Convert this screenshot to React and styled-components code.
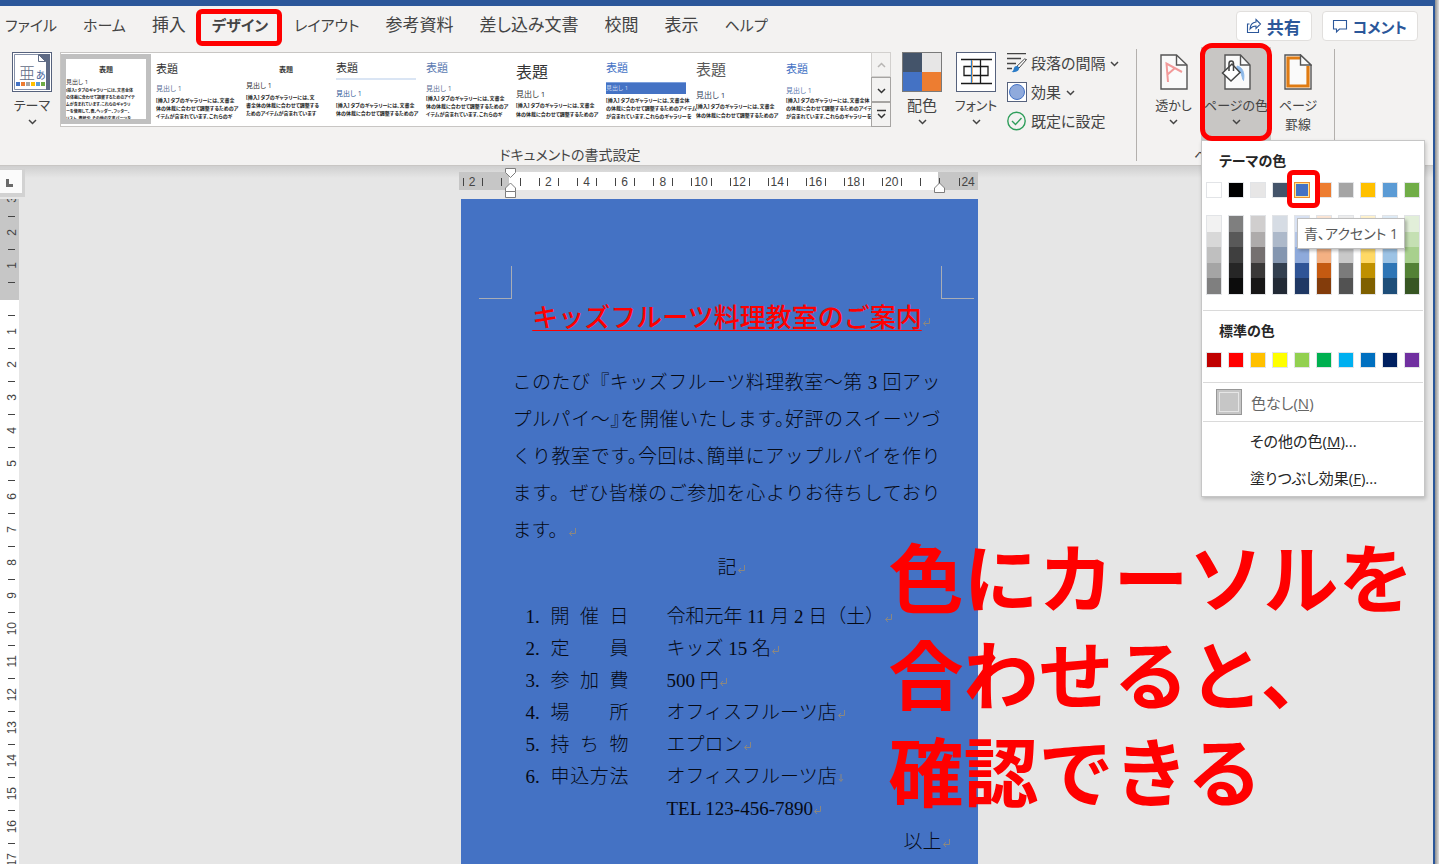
import { useState } from "react";
import styled, { createGlobalStyle, css } from "styled-components";

const GlobalStyle = createGlobalStyle`
*, *::before, *::after {
  box-sizing: border-box;
}

body {
  margin: 0;
  overflow: hidden;
  font-family: "Open Sans", "Noto Sans CJK JP", sans-serif;
  font-size: 15px;
  color: #444444;
}

button {
  margin: 0;
  padding: 0;
  border: 0;
  background: none;
  font: inherit;
  color: inherit;
  cursor: pointer;
}

h1, h2, p, ol {
  margin: 0;
  padding: 0;
}
`;

const Desktop = styled.div`
display: flex;
height: 100vh;
padding-right: 4px;
overflow: hidden;
background: linear-gradient(to left, #e0e0e0, #8f8f8f 4px);
`;

const Frame = styled.div`
position: relative;
display: flex;
flex-direction: column;
flex: 1;
min-width: 0;
border-top: 6px solid #2b579a;
border-right: 2px solid #2b579a;
background: #f3f2f1;
`;

/* ---------- tabs ---------- */

const TabBar = styled.nav`
display: flex;
align-items: center;
gap: 26px;
height: 40px;
padding: 0 15px 0 5px;
font-size: 17px;
font-feature-settings: "palt";
`;

const TabWrap = styled.div`
position: relative;
`;

const Tab = styled.button`
display: block;
height: 34px;
line-height: 30px;
white-space: nowrap;
font-size: ${({ $kana }) => ($kana ? "15px" : "17px")};
border-bottom: 2px solid ${({ $active }) => ($active ? "#2b579a" : "transparent")};
font-weight: ${({ $active }) => ($active ? 700 : 400)};
`;

const Actions = styled.div`
display: flex;
gap: 10px;
margin-left: auto;
`;

const ActionButton = styled.button`
display: flex;
align-items: center;
gap: 5px;
height: 30px;
padding: 0 10px 0 9px;
border: 1px solid #e1dfdd;
border-radius: 4px;
background: #ffffff;
color: #2b579a;
font-size: ${({ $kana }) => ($kana ? "15px" : "17px")};
font-weight: 700;
white-space: nowrap;
`;

const Highlight = styled.div`
position: absolute;
inset: ${({ $inset }) => $inset};
border: 5px solid #ff0000;
border-radius: ${({ $radius }) => $radius || "6px"};
pointer-events: none;
z-index: 3;
`;

/* ---------- ribbon ---------- */

const Ribbon = styled.div`
position: relative;
z-index: 2;
display: flex;
padding-top: 1px;
border-bottom: 1px solid #c8c6c4;
font-feature-settings: "palt";
`;

const Group = styled.section`
display: flex;
flex-direction: column;
padding: ${({ $pad }) => $pad};
`;

const GroupRow = styled.div`
display: flex;
height: 94px;
`;

const GroupLabel = styled.div`
margin-top: 4px;
line-height: 20px;
font-size: 14px;
text-align: center;
`;

const Divider = styled.div`
width: 1px;
margin: 2px 0 4px;
background: #b3b0ad;
`;

const ButtonWrap = styled.div`
position: relative;
`;

const BigButton = styled.button`
display: flex;
flex-direction: column;
align-items: center;
width: ${({ $width }) => $width};
height: 94px;
padding-top: 5px;
line-height: 19px;
font-size: ${({ $kana }) => ($kana ? "13px" : "15px")};
white-space: nowrap;
background: ${({ $pressed }) => ($pressed ? "#c8c6c4" : "transparent")};
`;

const IconSlot = styled.span`
display: flex;
align-items: center;
justify-content: center;
height: 40px;
margin-bottom: 4px;
`;

const SmallList = styled.div`
display: flex;
flex-direction: column;
width: 133px;
padding: 1px 0 0 4px;
`;

const SmallButton = styled.button`
display: flex;
align-items: center;
gap: 4px;
height: 29px;
white-space: nowrap;
`;

const Gallery = styled.div`
display: flex;
height: 75px;
margin: 5px 4px 0 0;
border: 1px solid #c8c6c4;
background: #ffffff;
`;

const Thumb = styled.button`
display: flex;
flex-direction: column;
width: 90px;
height: 73px;
padding: ${({ $top }) => $top}px 5px 0;
text-align: left;
color: #222222;
white-space: nowrap;
${({ $selected }) =>
    $selected &&
    css`
      height: 70px;
      margin-top: 1px;
      border: 5px solid #c0c0c0;
      padding: ${({ $top }) => $top - 6}px 0 0;
      overflow: hidden;
    `}
`;

const ThumbTitle = styled.span`
line-height: 14px;
font-size: ${({ $size }) => $size}px;
font-weight: ${({ $center }) => ($center ? 700 : 400)};
text-align: ${({ $center }) => ($center ? "center" : "left")};
color: ${({ $color }) => $color || "#333333"};
`;

const ThumbRule = styled.span`
height: 2px;
margin-top: 3px;
background: #dae5f4;
`;

const ThumbHeading = styled.span`
margin-top: ${({ $gap }) => $gap}px;
line-height: 10px;
font-size: ${({ $size }) => $size || 7}px;
color: ${({ $color }) => $color || "#333333"};
${({ $banner }) =>
    $banner &&
    css`
      line-height: 11px;
      border-top: 1px solid #7da0dc;
      background: #4472c4;
      color: #c9d8f2;
    `}
`;

const ThumbText = styled.span`
margin-top: ${({ $gap }) => $gap}px;
line-height: ${({ $line }) => $line || 8}px;
font-size: ${({ $size }) => $size || 5}px;
font-weight: 700;
white-space: pre;
`;

const GalleryScroll = styled.div`
display: flex;
flex-direction: column;
width: 20px;
margin: -1px -1px -1px 0;
`;

const ScrollButton = styled.button`
display: flex;
flex: 1;
align-items: center;
justify-content: center;
border: 1px solid ${({ disabled }) => (disabled ? "#d2d0ce" : "#a6a4a2")};
background: #f3f2f1;
color: ${({ disabled }) => (disabled ? "#b8b6b4" : "#333333")};
`;

/* ---------- colour menu ---------- */

const Menu = styled.div`
position: absolute;
top: 93px;
left: 0;
width: 224px;
border: 1px solid #c6c6c6;
background: #ffffff;
box-shadow: 1px 2px 4px rgba(0, 0, 0, 0.2);
color: #262626;
z-index: 2;
`;

const MenuTitle = styled.h2`
padding: 0 17px 1px;
line-height: 40px;
font-size: 14px;
font-weight: 700;
`;

const SwatchRow = styled.div`
display: flex;
justify-content: center;
gap: 6px;
margin-bottom: ${({ $after }) => $after}px;
`;

const SwatchWrap = styled.div`
position: relative;
display: flex;
`;

const Swatch = styled.button`
width: 16px;
height: 16px;
border: 1px solid ${({ $active }) => ($active ? "#ee8f2d" : "#e2e4e7")};
background: ${({ $color }) => $color};
box-shadow: ${({ $active }) => ($active ? "inset 0 0 0 1px #ffe294" : "none")};
`;

const TintColumn = styled.div`
display: flex;
flex-direction: column;
width: 16px;
height: 80px;
border: 1px solid #e2e4e7;
`;

const Tint = styled.button`
flex: 1;
background: ${({ $color }) => $color};
`;

const Tooltip = styled.div`
position: absolute;
top: 36px;
left: 3px;
padding: 0 6px;
border: 1px solid #bebebe;
background: #ffffff;
box-shadow: 2px 2px 3px rgba(0, 0, 0, 0.25);
color: #575757;
font-size: 14px;
line-height: 29px;
white-space: nowrap;
z-index: 4;
`;

const MenuItem = styled.button`
display: flex;
align-items: center;
gap: 9px;
width: 100%;
height: ${({ $icon }) => ($icon ? "38px" : "37px")};
padding-left: ${({ $icon }) => ($icon ? "14px" : "48px")};
color: ${({ $icon }) => ($icon ? "#666666" : "#262626")};
`;

const MenuLine = styled.div`
height: 1px;
margin: 0 1px;
background: #dadada;
`;

const NoColorBox = styled.span`
width: 26px;
height: 26px;
border: 1px solid #979797;
background: #c6c6c6;
box-shadow: inset 0 0 0 2px #c6c6c6, inset 0 0 0 3px #e6e6e6;
`;

/* ---------- work area ---------- */

const WorkArea = styled.main`
display: flex;
flex-direction: column;
flex: 1;
min-height: 0;
background: linear-gradient(#cfcfcf, #e6e6e6 12px);
`;

const RulerBar = styled.div`
display: grid;
grid-template-columns: 28px 1fr;
height: 33px;
padding: 3px 25px 0 0;
flex-shrink: 0;
`;

const TabStop = styled.button`
display: flex;
align-items: center;
justify-content: center;
width: 25px;
height: 28px;
padding: 3px 4px 0 0;
border: solid #d2d2d2;
border-width: 1px 3px 4px 0;
background: #fbfbfb;
`;

const HRulerWrap = styled.div`
position: relative;
width: 519px;
height: 18px;
margin: 3px auto 0;
`;

const HRuler = styled.div`
display: flex;
height: 18px;
padding-left: 4px;
background: linear-gradient(to right, #c6c6c6 50px, #ffffff 50px 479px, #c6c6c6 479px);
font: 12px/20px "Liberation Sans", sans-serif;
`;

const HCell = styled.div`
flex: 1;
text-align: center;
background: linear-gradient(#444444, #444444) 0 6px / 1px 8px no-repeat;
white-space: nowrap;
`;

const Marker = styled.svg`
position: absolute;
left: ${({ $left }) => $left}px;
top: ${({ $top }) => $top}px;
`;

const Sheet = styled.div`
display: grid;
grid-template-columns: 28px 1fr;
flex: 1;
min-height: 0;
padding-right: 23px;
overflow: hidden;
`;

const VRuler = styled.div`
width: 19px;
background: linear-gradient(#c6c6c6 101px, #ffffff 101px);
font: 12px/16px "Liberation Sans", sans-serif;
overflow: hidden;
`;

const VCell = styled.div`
display: flex;
align-items: center;
justify-content: center;
height: ${({ $cut }) => ($cut ? "17px" : "33px")};
padding-left: 4px;
overflow: hidden;
background: ${({ $cut }) =>
    $cut ? "none" : "linear-gradient(#444444, #444444) 8px 0 / 7px 1px no-repeat"};

span {
  writing-mode: vertical-rl;
  transform: rotate(180deg);
  ${({ $cut }) => $cut && "margin-top: -17px;"}
}
`;

const Page = styled.article`
position: relative;
width: 517px;
min-height: 100%;
margin: 0 auto;
padding: 99px 37px 0 52px;
background: #4472c4;
color: #060a14;
font-family: "Liberation Serif", "Noto Sans CJK JP", serif;
font-size: 19px;
font-weight: 300;
`;

const CropMark = styled.span`
position: absolute;
top: 67px;
width: 33px;
height: 33px;
border: solid #a9adb5;
${({ $side }) =>
    $side === "left"
      ? "left: 18px; border-width: 0 1px 1px 0;"
      : "right: 4px; border-width: 0 0 1px 1px;"}
`;

const DocTitle = styled.h1`
line-height: 36px;
font-family: "Noto Sans CJK JP", sans-serif;
font-size: 26px;
font-weight: 500;
color: #ff0000;
text-align: center;
white-space: nowrap;
padding-left: 10px;

span {
  text-decoration: underline;
  text-decoration-thickness: 1px;
  text-decoration-skip-ink: none;
  text-underline-offset: 3px;
}
`;

const Lead = styled.p`
margin-top: 30px;
line-height: 37px;
`;

const Line = styled.span`
display: block;
white-space: nowrap;
text-align-last: ${({ $last }) => ($last ? "left" : "justify")};
font-feature-settings: ${({ $tight }) => ($tight ? '"halt"' : "normal")};
`;

const Centered = styled.p`
line-height: 37px;
padding-left: 10px;
text-align: center;
`;

const Details = styled.ol`
margin-top: 15px;
padding-left: 13px;
list-style: none;
line-height: 32px;
`;

const Detail = styled.li`
display: grid;
grid-template-columns: 25px 78px 1fr;
white-space: nowrap;
`;

const DetailLabel = styled.span`
text-align-last: justify;
`;

const DetailValue = styled.span`
padding-left: 38px;
`;

const Closing = styled.p`
line-height: 34px;
text-align: right;
white-space: nowrap;
margin-right: -10px;
`;

const Callout = styled.div`
position: absolute;
top: 520px;
left: calc(50% + 172px);
font-family: "Noto Sans CJK JP", sans-serif;
font-size: 75px;
font-weight: 700;
line-height: 97px;
color: #ff0000;
white-space: nowrap;
pointer-events: none;
z-index: 3;
`;

/* ---------- data ---------- */

const tabs = [
  "ファイル",
  "ホーム",
  "挿入",
  "デザイン",
  "レイアウト",
  "参考資料",
  "差し込み文書",
  "校閲",
  "表示",
  "ヘルプ",
];

const isKana = (text) => /^[\u30a0-\u30ff]+$/.test(text);

const bodyNarrow = "[挿入] タブのギャラリーには、文書全\n体の体裁に合わせて調整するためのア\nイテムが含まれています。これらのギ";
const bodyShort = "[挿入] タブのギャラリーには、文書全\n体の体裁に合わせて調整するためのア";
const bodyWide = "[挿入] タブのギャラリーには、文書全体\nの体裁に合わせて調整するためのアイテム\nが含まれています。これらのギャラリーを";

const styleSets = [
  {
    top: 10, size: 7, center: true, selected: true,
    gap: 0, headSize: 6, textGap: 0, line: 7, textSize: 4,
    text: "[挿入] タブのギャラリーには、文書全体\nの体裁に合わせて調整するためのアイテ\nムが含まれています。これらのギャラリ\nーを使用して、表、ヘッダー、フッター、\nリスト、表紙や、その他の文書パーツを",
  },
  { top: 9, size: 11, gap: 8, headColor: "#5b6f95", textGap: 2, text: bodyNarrow },
  {
    top: 10, size: 7, center: true, gap: 4, textGap: 2,
    text: "[挿入] タブのギャラリーには、文\n書全体の体裁に合わせて調整する\nためのアイテムが含まれています",
  },
  { top: 8, size: 11, rule: true, gap: 9, headColor: "#2f5a96", textGap: 2, text: bodyShort },
  { top: 8, size: 11, color: "#5b7ab0", gap: 9, headColor: "#5b6f95", textGap: 0, text: bodyNarrow },
  { top: 12, size: 16, gap: 10, headSize: 8, textGap: 2, line: 9, text: bodyShort },
  { top: 8, size: 11, color: "#4472c4", banner: true, gap: 7, headSize: 6, textGap: 2, text: bodyWide },
  { top: 9, size: 15, color: "#595959", gap: 14, headSize: 8, headColor: "#33435c", textGap: 2, line: 9, text: bodyShort },
  { top: 9, size: 11, color: "#4472c4", gap: 10, headColor: "#5b7ab0", textGap: 0, text: bodyWide },
];

const themeColors = [
  ["白、背景 1", "#ffffff", ["#f2f2f2", "#d8d8d8", "#bfbfbf", "#a5a5a5", "#7f7f7f"]],
  ["黒、テキスト 1", "#000000", ["#7f7f7f", "#595959", "#3f3f3f", "#262626", "#0c0c0c"]],
  ["薄い灰色、背景 2", "#e7e6e6", ["#d0cece", "#aeabab", "#757070", "#3a3838", "#171616"]],
  ["ブルーグレー、テキスト 2", "#44546a", ["#d6dce4", "#adb9ca", "#8496b0", "#323f4f", "#222a35"]],
  ["青、アクセント 1", "#4472c4", ["#d9e2f3", "#b4c6e7", "#8eaadb", "#2f5496", "#1f3864"]],
  ["オレンジ、アクセント 2", "#ed7d31", ["#fbe5d5", "#f7cbac", "#f4b183", "#c55a11", "#833c0b"]],
  ["灰色、アクセント 3", "#a5a5a5", ["#ededed", "#dbdbdb", "#c9c9c9", "#7b7b7b", "#525252"]],
  ["ゴールド、アクセント 4", "#ffc000", ["#fff2cc", "#fee599", "#ffd965", "#bf9000", "#7f6000"]],
  ["青、アクセント 5", "#5b9bd5", ["#deebf6", "#bdd7ee", "#9cc3e5", "#2e75b5", "#1e4e79"]],
  ["緑、アクセント 6", "#70ad47", ["#e2efd9", "#c5e0b3", "#a8d08d", "#538135", "#375623"]],
];

const standardColors = [
  ["濃い赤", "#c00000"],
  ["赤", "#ff0000"],
  ["オレンジ", "#ffc000"],
  ["黄", "#ffff00"],
  ["薄い緑", "#92d050"],
  ["緑", "#00b050"],
  ["薄い青", "#00b0f0"],
  ["青", "#0070c0"],
  ["濃い青", "#002060"],
  ["紫", "#7030a0"],
];

const details = [
  ["1.", "開催日", "令和元年 11 月 2 日（土）"],
  ["2.", "定員", "キッズ 15 名"],
  ["3.", "参加費", "500 円"],
  ["4.", "場所", "オフィスフルーツ店"],
  ["5.", "持ち物", "エプロン"],
  ["6.", "申込方法", "オフィスフルーツ店"],
];

const hUnits = Array.from({ length: 27 }, (_, i) => i - 2);
const vUnits = [3, 2, 1, 0, ...Array.from({ length: 18 }, (_, i) => i + 1)];

/* ---------- icons ---------- */

const Chevron = ({ up, bar }) => (
  <svg width="11" height="12" viewBox="0 0 11 12" fill="none" stroke="currentColor" strokeWidth="1.5" aria-hidden="true">
    {bar && <path d="M1 1.5h9" />}
    <path d={up ? "M2 8l3.5-3.5L9 8" : "M2 5l3.5 3.5L9 5"} />
  </svg>
);

const ShareIcon = () => (
  <svg width="16" height="16" viewBox="0 0 16 16" fill="none" stroke="#2b579a" strokeWidth="1.1" aria-hidden="true">
    <path d="M3.5 6H1.5v8.5h11V11" />
    <path d="M10 1.5L14.5 6 10 10.5V8C7 8 5.5 9 4 11c.2-4 2.5-6.5 6-7z" />
  </svg>
);

const CommentIcon = () => (
  <svg width="16" height="16" viewBox="0 0 16 16" fill="none" stroke="#2b579a" strokeWidth="1.1" aria-hidden="true">
    <path d="M1.5 2.5h13v8.500H7.500L4.500 14v-3h-3z" />
  </svg>
);

const ThemeIcon = () => (
  <svg width="40" height="40" viewBox="0 0 40 40" aria-hidden="true">
    <rect x="0.5" y="0.5" width="39" height="39" fill="#fff" stroke="#56627d" />
    <path d="M2.5 2.500h35v35h-35z" fill="#fff" stroke="#8691a8" />
    <path d="M26 2h12v36h-4V10z" fill="#5f6b85" />
    <path d="M26.500 2.500v7h7z" fill="#fff" stroke="#5f6b85" />
    <text x="7" y="27" fontSize="16" fill="#5f6b85" fontFamily="Noto Sans CJK JP" fontWeight="300">亜</text>
    <text x="24" y="27" fontSize="10" fill="#3f5f9a" fontFamily="Noto Sans CJK JP">あ</text>
    {["#4472c4", "#ed7d31", "#a5a5a5", "#ffc000", "#5b9bd5", "#70ad47"].map((c, i) => (
      <rect key={c} x={4 + i * 5} y="30" width="4" height="4" fill={c} />
    ))}
  </svg>
);

const ColorsIcon = () => (
  <svg width="40" height="40" viewBox="0 0 40 40" aria-hidden="true">
    <rect width="40" height="40" fill="#7a7a7a" />
    <path d="M1 1h19v19H1z" fill="#44546a" />
    <path d="M20 1h19v19H20z" fill="#e7e6e6" />
    <path d="M1 20h19v19H1z" fill="#4472c4" />
    <path d="M20 20h19v19H20z" fill="#ed7d31" />
  </svg>
);

const FontsIcon = () => (
  <svg width="40" height="40" viewBox="0 0 40 40" fill="none" aria-hidden="true">
    <rect x="0.5" y="0.5" width="39" height="39" fill="#fff" stroke="#56627d" />
    <path d="M5 7.500h31M5 31.500h31M8 14.500h24v9H8z" stroke="#1a1a1a" strokeWidth="1.3" />
    <path d="M15.500 8v23" stroke="#2f7fc9" strokeWidth="1.3" />
    <path d="M24.500 8v23" stroke="#1a1a1a" strokeWidth="1.3" />
    <path d="M16.500 8v23" stroke="#f0b070" />
  </svg>
);

const SpacingIcon = () => (
  <svg width="20" height="20" viewBox="0 0 20 20" fill="none" aria-hidden="true">
    <path d="M0 .7h19M0 5.500h14M0 10.500h9M0 15.500h5" stroke="#444" strokeWidth="1.3" />
    <path d="M19.500 6.500L12 15l-2-1.800L17.500 6z" fill="#fff" stroke="#444" />
    <path d="M9.500 13c2 0 3 1.500 2.500 3-.8 2.500-4 3.500-7.500 3 2-1 2-2.500 2.500-4 .4-1.200 1.300-2 2.500-2z" fill="#2b7cc7" />
  </svg>
);

const EffectsIcon = () => (
  <svg width="20" height="20" viewBox="0 0 20 20" aria-hidden="true">
    <rect x="0.5" y="0.5" width="19" height="19" fill="#fff" stroke="#56627d" />
    <circle cx="10" cy="10" r="7.5" fill="#8faadc" stroke="#4472c4" />
  </svg>
);

const CheckIcon = () => (
  <svg width="20" height="20" viewBox="0 0 20 20" fill="none" stroke="#2f9e5b" strokeWidth="1.4" aria-hidden="true">
    <circle cx="9.5" cy="10" r="8.7" />
    <path d="M5 10l3.500 3.500 6-6.500" />
  </svg>
);

const WatermarkIcon = () => (
  <svg width="28" height="36" viewBox="0 0 28 36" fill="none" aria-hidden="true">
    <path d="M1 1h15.500L27 11v24H1z" fill="#fafafa" stroke="#555" strokeWidth="1.4" />
    <path d="M16.500 1v10H27" stroke="#555" strokeWidth="1.4" />
    <path d="M8 28L6.500 9.500 22 18M7.500 20.500L15 14" stroke="#f29a9a" strokeWidth="2" />
  </svg>
);

const PageColorIcon = () => (
  <svg width="32" height="36" viewBox="0 0 32 36" fill="none" aria-hidden="true">
    <path d="M5 1h15.500L30 11v24H5z" fill="#fafafa" stroke="#555" strokeWidth="1.4" />
    <path d="M20.500 1v10H30" stroke="#555" strokeWidth="1.4" />
    <path d="M17 12c5 1 8 6 6.500 14.500-2-3-1-9-6.500-11z" fill="#8cb8e8" stroke="#8cb8e8" />
    <path d="M2.500 19L12 10l8 8.500-9 8.500z" fill="#fff" stroke="#444" strokeWidth="1.5" />
    <path d="M9 17V9.500c0-3.500 4.500-3.500 4.500 0V17" stroke="#444" strokeWidth="1.5" />
  </svg>
);

const BordersIcon = () => (
  <svg width="28" height="36" viewBox="0 0 28 36" fill="none" aria-hidden="true">
    <path d="M1 1h15.500L27 11v24H1z" fill="#fafafa" stroke="#555" strokeWidth="1.4" />
    <path d="M16 4H4v28h20V12" stroke="#e07b12" strokeWidth="3.2" />
    <path d="M16.500 1v10H27z" fill="#fafafa" stroke="#555" strokeWidth="1.4" />
  </svg>
);

const ReturnMark = ({ down }) => (
  <svg width="9" height="9" viewBox="0 0 9 9" fill="none" stroke="#8b8780" aria-hidden="true">
    {down ? <path d="M4 0v7M2 5l2 2.500L6 5" /> : <path d="M7.500 0v5.500h-6M4 3L1.500 5.500 4 8" />}
  </svg>
);

const menuItems = [
  ["その他の色", "M"],
  ["塗りつぶし効果", "F"],
];

function StyleSet({ item }) {
  return (
    <Thumb $top={item.top} $selected={item.selected}>
      <ThumbTitle $size={item.size} $center={item.center} $color={item.color}>表題</ThumbTitle>
      {item.rule && <ThumbRule />}
      <ThumbHeading $gap={item.gap} $size={item.headSize} $color={item.headColor} $banner={item.banner}>
        見出し 1
      </ThumbHeading>
      <ThumbText $gap={item.textGap} $line={item.line} $size={item.textSize}>{item.text}</ThumbText>
    </Thumb>
  );
}

function ColorMenu() {
  const [picked, setPicked] = useState("青、アクセント 1");

  return (
    <Menu>
      <MenuTitle>テーマの色</MenuTitle>
      <SwatchRow $after={17}>
        {themeColors.map(([name, color]) => (
          <SwatchWrap key={name}>
            <Swatch aria-label={name} $color={color} $active={picked === name} onClick={() => setPicked(name)} />
            {picked === name && (
              <>
                <Highlight $inset="-12px -10px -10px -7px" />
                <Tooltip role="tooltip">{name}</Tooltip>
              </>
            )}
          </SwatchWrap>
        ))}
      </SwatchRow>
      <SwatchRow $after={15}>
        {themeColors.map(([name, , tints]) => (
          <TintColumn key={name}>
            {tints.map((tint, i) => (
              <Tint key={tint} $color={tint} aria-label={`${name} ${i + 1}`} />
            ))}
          </TintColumn>
        ))}
      </SwatchRow>
      <MenuLine />
      <MenuTitle>標準の色</MenuTitle>
      <SwatchRow $after={14}>
        {standardColors.map(([name, color]) => (
          <Swatch key={name} aria-label={name} $color={color} />
        ))}
      </SwatchRow>
      <MenuLine />
      <MenuItem $icon>
        <NoColorBox />
        <span>色なし(<u>N</u>)</span>
      </MenuItem>
      <MenuLine />
      {menuItems.map(([text, key]) => (
        <MenuItem key={key}>
          <span>{text}(<u>{key}</u>)...</span>
        </MenuItem>
      ))}
    </Menu>
  );
}

function App() {
  const [tab, setTab] = useState("デザイン");
  const [menuOpen, setMenuOpen] = useState(true);

  return (
    <Desktop>
      <GlobalStyle />
      <Frame>
        <TabBar>
          {tabs.map((name) => (
            <TabWrap key={name}>
              <Tab $active={tab === name} $kana={isKana(name)} onClick={() => setTab(name)}>{name}</Tab>
              {tab === name && <Highlight $inset="0 -14px -3px -16px" />}
            </TabWrap>
          ))}
          <Actions>
            <ActionButton><ShareIcon />共有</ActionButton>
            <ActionButton $kana><CommentIcon />コメント</ActionButton>
          </Actions>
        </TabBar>

        <Ribbon>
          <Group $pad="0 0 0 4px">
            <GroupRow>
              <BigButton $width="56px" $kana>
                <IconSlot><ThemeIcon /></IconSlot>
                テーマ
                <Chevron />
              </BigButton>
              <Gallery>
                {styleSets.map((item, i) => (
                  <StyleSet key={i} item={item} />
                ))}
                <GalleryScroll>
                  <ScrollButton disabled aria-label="前の行"><Chevron up /></ScrollButton>
                  <ScrollButton aria-label="次の行"><Chevron /></ScrollButton>
                  <ScrollButton aria-label="その他"><Chevron bar /></ScrollButton>
                </GalleryScroll>
              </Gallery>
              <BigButton $width="54px">
                <IconSlot><ColorsIcon /></IconSlot>
                配色
                <Chevron />
              </BigButton>
              <BigButton $width="54px" $kana>
                <IconSlot><FontsIcon /></IconSlot>
                フォント
                <Chevron />
              </BigButton>
              <SmallList>
                <SmallButton><SpacingIcon />段落の間隔<Chevron /></SmallButton>
                <SmallButton><EffectsIcon />効果<Chevron /></SmallButton>
                <SmallButton><CheckIcon />既定に設定</SmallButton>
              </SmallList>
            </GroupRow>
            <GroupLabel>ドキュメントの書式設定</GroupLabel>
          </Group>
          <Divider />
          <Group $pad="0 9px">
            <GroupRow>
              <BigButton $width="55px" $kana>
                <IconSlot><WatermarkIcon /></IconSlot>
                透かし
                <Chevron />
              </BigButton>
              <ButtonWrap>
                <BigButton $width="70px" $kana $pressed={menuOpen} onClick={() => setMenuOpen(!menuOpen)}>
                  <IconSlot><PageColorIcon /></IconSlot>
                  ページの色
                  <Chevron />
                </BigButton>
                {menuOpen && <ColorMenu />}
                <Highlight $inset="-4px -1px 0 -1px" $radius="12px" />
              </ButtonWrap>
              <BigButton $width="54px" $kana>
                <IconSlot><BordersIcon /></IconSlot>
                <span>ページ</span>
                <span>罫線</span>
              </BigButton>
            </GroupRow>
            <GroupLabel>ページの背景</GroupLabel>
          </Group>
          <Divider />
        </Ribbon>

        <WorkArea>
          <RulerBar>
            <TabStop aria-label="タブ">
              <svg width="9" height="9" viewBox="0 0 9 9" aria-hidden="true">
                <path d="M1 0h3v5h4v3H1z" fill="#6a6a6a" />
              </svg>
            </TabStop>
            <HRulerWrap>
              <HRuler>
                {hUnits.map((n) => (
                  <HCell key={n}>{n % 2 === 0 && n !== 0 && n !== 22 ? Math.abs(n) : ""}</HCell>
                ))}
              </HRuler>
              <Marker $left={46} $top={-4} width="12" height="32" viewBox="0 0 12 32" fill="#fff" stroke="#7d7d7d">
                <path d="M0.5 0.5h10v4l-5 5-5-5z" />
                <path d="M5.5 15l5 5v3.500h-10V20z" />
                <path d="M0.5 23.500h10v6h-10z" />
              </Marker>
              <Marker $left={475} $top={10} width="12" height="12" viewBox="0 0 12 12" fill="#fff" stroke="#7d7d7d">
                <path d="M5.5 1l5 5v4.500h-10V6z" />
              </Marker>
            </HRulerWrap>
          </RulerBar>

          <Sheet>
            <VRuler>
              {vUnits.map((n, i) => (
                <VCell key={i} $cut={i === 0}>
                  <span>{n === 0 ? "" : n}</span>
                </VCell>
              ))}
            </VRuler>
            <Page>
              <CropMark $side="left" />
              <CropMark $side="right" />
              <DocTitle><span>キッズフルーツ料理教室のご案内</span><ReturnMark /></DocTitle>
              <Lead>
                <Line>このたび『キッズフルーツ料理教室～第 3 回アッ</Line>
                <Line $tight>プルパイ～』を開催いたします。好評のスイーツづ</Line>
                <Line $tight>くり教室です。今回は、簡単にアップルパイを作り</Line>
                <Line>ます。ぜひ皆様のご参加を心よりお待ちしており</Line>
                <Line $last>ます。<ReturnMark /></Line>
              </Lead>
              <Centered>記<ReturnMark /></Centered>
              <Details>
                {details.map(([no, label, value], i) => (
                  <Detail key={no}>
                    <span>{no}</span>
                    <DetailLabel>{label}</DetailLabel>
                    <DetailValue>
                      {value}<ReturnMark down={i === 5} />
                      {i === 5 && <><br />TEL 123-456-7890<ReturnMark /></>}
                    </DetailValue>
                  </Detail>
                ))}
              </Details>
              <Closing>以上<ReturnMark /></Closing>
            </Page>
          </Sheet>
        </WorkArea>

        <Callout>
          色にカーソルを<br />
          合わせると、<br />
          確認できる
        </Callout>
      </Frame>
    </Desktop>
  );
}

export default App;
